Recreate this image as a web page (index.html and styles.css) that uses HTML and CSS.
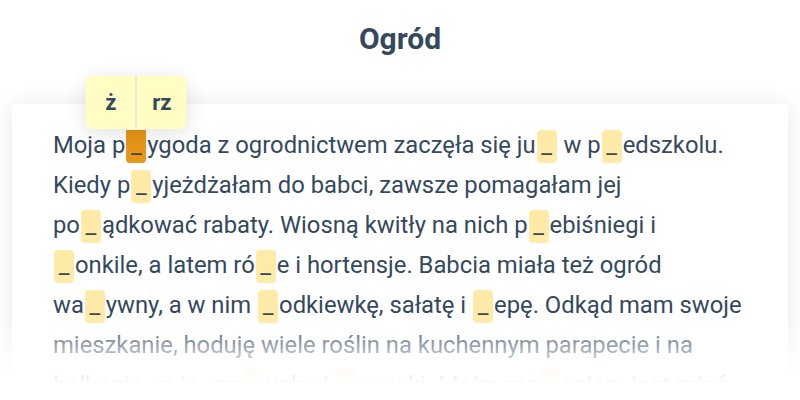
FILE: index.html
```html
<!DOCTYPE html>
<html lang="pl">
<head>
    <meta charset="UTF-8">
    <meta name="viewport" content="width=device-width, initial-scale=1.0">
    <title>Ogród</title>
    <link rel="stylesheet" href="styles.css">
</head>
<body>
    <h1 class="title">Ogród</h1>

    <section class="card">
        <p class="story">
            Moja <span class="word">p<span class="gap active">_<span class="picker"><span class="option">ż</span><span class="option">rz</span></span></span>ygoda</span> z ogrodnictwem zaczęła się <span class="word">ju<span class="gap">_</span></span> w <span class="word">p<span class="gap">_</span>edszkolu.</span>
            Kiedy <span class="word">p<span class="gap">_</span>yjeżdżałam</span> do babci, zawsze pomagałam jej
            <span class="word">po<span class="gap">_</span>ądkować</span> rabaty. Wiosną kwitły na nich <span class="word">p<span class="gap">_</span>ebiśniegi</span> i
            <span class="word"><span class="gap">_</span>onkile,</span> a latem <span class="word">ró<span class="gap">_</span>e</span> i hortensje. Babcia miała też ogród
            <span class="word">wa<span class="gap">_</span>ywny,</span> a w nim <span class="word"><span class="gap">_</span>odkiewkę,</span> sałatę i <span class="word"><span class="gap">_</span>epę.</span> Odkąd mam swoje
            mieszkanie, hoduję wiele roślin na kuchennym parapecie i na
            balkonie, m.in. <span class="word">rze<span class="gap">_</span>uchę</span> i <span class="word"><span class="gap">_</span>urawki.</span> Moim <span class="word">ma<span class="gap">_</span>eniem</span> jest mieć
            własny ogród.
        </p>
    </section>

    <div class="fade"></div>
</body>
</html>
```

FILE: styles.css
```css
body {
    margin: 0;
    font-family: Roboto, 'Noto Sans', sans-serif;
    background-color: #fff;
    color: #34495e;
    overflow: hidden;
}

.title {
    margin: 21px 0 47px;
    font-size: 30px;
    line-height: 36px;
    font-weight: 700;
    text-align: center;
}

.card {
    margin: 0 12px;
    padding: 21px 41px;
    background-color: #fff;
    border-radius: 4px;
    box-shadow: 0 0 22px rgba(0, 0, 0, 0.09);
}

.story {
    margin: 0;
    font-size: 23.8px;
    line-height: 40px;
}

.word {
    white-space: nowrap;
}

.gap {
    display: inline-block;
    position: relative;
    width: 20px;
    height: 33px;
    margin: 0 1px;
    line-height: 31px;
    text-align: center;
    vertical-align: 0;
    background-color: #ffeaa7;
    border-radius: 4px;
}

.gap.active {
    background-color: #e8961a;
    border-radius: 0 0 4px 4px;
}

.picker {
    position: absolute;
    bottom: calc(100% + 1px);
    left: 50%;
    transform: translateX(-50%);
    display: flex;
    background-color: #fffcc4;
    border-radius: 6px;
    box-shadow: 0 4px 20px rgba(0, 0, 0, 0.12);
    z-index: 2;
}

.option {
    width: 50px;
    height: 53px;
    line-height: 53px;
    font-size: 22px;
    font-weight: 700;
    text-align: center;
}

.option + .option {
    border-left: 1px solid #d5dde3;
}

.fade {
    position: fixed;
    left: 0;
    right: 0;
    bottom: 0;
    height: 82px;
    background: linear-gradient(to bottom, rgba(255, 255, 255, 0) 0%, rgba(255, 255, 255, 0.6) 40%, #fff 80%);
    z-index: 3;
}
```
